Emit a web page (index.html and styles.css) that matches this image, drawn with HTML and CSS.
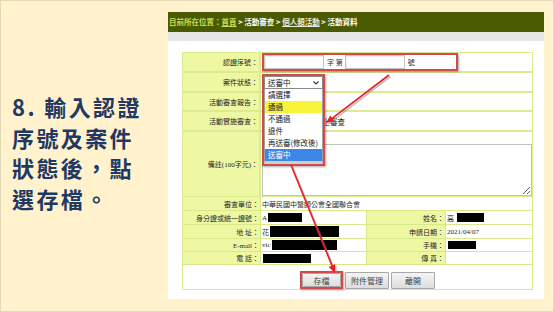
FILE: index.html
```html
<!DOCTYPE html>
<html lang="zh-Hant">
<head>
<meta charset="utf-8">
<title>存檔步驟</title>
<link rel="stylesheet" href="styles.css">
</head>
<body>
<div class="slide">
  <div class="note">
    <p>8. 輸入認證<br>序號及案件<br>狀態後，點<br>選存檔。</p>
  </div>
  <div class="panel">
    <div class="crumb"><span class="here">目前所在位置：<u>首頁</u></span> &gt; 活動審查 &gt; <u class="link">個人類活動</u> &gt; 活動資料</div>
    <div class="subbar"></div>
    <div class="content">
      <div class="form">
        <div class="lab">認證序號：</div>
        <div class="val">
          <div class="redbox serial">
            <span class="inp"></span><span class="t">字 第</span><span class="inp"></span><span class="t">號</span>
          </div>
        </div>
        <div class="lab">案件狀態：</div>
        <div class="val rel">
          <div class="dropdown">
            <div class="select">送審中
              <svg class="chev" width="6" height="4" viewBox="0 0 6 4"><path d="M0.5 0.5 L3 3 L5.5 0.5" fill="none" stroke="#333" stroke-width="1.1"/></svg>
            </div>
            <ul class="options">
              <li>請選擇</li>
              <li class="hl">通過</li>
              <li>不通過</li>
              <li>退件</li>
              <li>再送審(修改後)</li>
              <li class="sel">送審中</li>
            </ul>
          </div>
        </div>
        <div class="lab">活動審查報告：</div>
        <div class="val"></div>
        <div class="lab">活動實施審查：</div>
        <div class="val"><span class="review">線上審查</span></div>
        <div class="lab">備註(100字元)：</div>
        <div class="val"><textarea class="memo"></textarea></div>
      </div>
      <div class="info">
        <div class="lab">審查單位：</div>
        <div class="val span3">中華民國中醫師公會全國聯合會</div>
        <div class="lab">身分證或統一證號：</div>
        <div class="val">A<span class="mask w34 h9"></span></div>
        <div class="lab">姓名：</div>
        <div class="val">高<span class="mask w27 h9 m3"></span></div>
        <div class="lab">地 址：</div>
        <div class="val">花<span class="mask w69 h11"></span></div>
        <div class="lab">申請日期：</div>
        <div class="val">2021/04/07</div>
        <div class="lab">E-mail：</div>
        <div class="val">vic<span class="mask w65 h10"></span></div>
        <div class="lab">手機：</div>
        <div class="val"><span class="mask w28 h8"></span></div>
        <div class="lab">電 話：</div>
        <div class="val"><span class="mask w48 h9"></span></div>
        <div class="lab">傳 真：</div>
        <div class="val"></div>
      </div>
      <div class="buttons">
        <div class="redbox savebox"><button class="btn">存檔</button></div>
        <button class="btn">附件管理</button>
        <button class="btn">離開</button>
      </div>
    </div>
  </div>
  <svg class="arrows" width="554" height="312" viewBox="0 0 554 312">
    <g fill="#8a8a8a" stroke="#8a8a8a" opacity="0.55">
      <line x1="390.5" y1="76.5" x2="333.9" y2="119.7" stroke-width="1.6"/>
      <polygon points="327.5,124.5 336,122.5 331.7,116.9" stroke="none"/>
      <line x1="292.5" y1="166.5" x2="333.5" y2="267.1" stroke-width="1.6"/>
      <polygon points="336.5,274.5 336.7,265.8 330.2,268.4" stroke="none"/>
    </g>
    <g fill="#ee1c24" stroke="#ee1c24">
      <line x1="389" y1="75" x2="332.4" y2="118.2" stroke-width="1.6"/>
      <polygon points="326,123 334.5,121 330.2,115.4" stroke="none"/>
      <line x1="291" y1="165" x2="332" y2="265.6" stroke-width="1.6"/>
      <polygon points="335,273 335.2,264.3 328.7,266.9" stroke="none"/>
    </g>
  </svg>
</div>
</body>
</html>
```

FILE: styles.css
```css
html, body {
  margin: 0;
  padding: 0;
}

body {
  width: 554px;
  height: 312px;
  overflow: hidden;
}

.slide {
  position: relative;
  width: 554px;
  height: 312px;
  background: #fff2cc;
  box-shadow: inset 0 0 0 1px #e4d9b6;
  display: flex;
  align-items: flex-start;
}

.note {
  flex: none;
  width: 168px;
  box-sizing: border-box;
  padding: 91px 0 0 12px;
}

.note p {
  margin: 0;
  font-family: "Noto Sans CJK TC", "Noto Sans", sans-serif;
  font-weight: 700;
  font-size: 22px;
  line-height: 30.5px;
  letter-spacing: 2.4px;
  color: #1f3864;
  white-space: nowrap;
}

.panel {
  flex: none;
  width: 376px;
  height: 287px;
  margin-top: 12px;
  background: #ffffff;
  display: flex;
  flex-direction: column;
}

.crumb {
  height: 20px;
  line-height: 20px;
  background: #4a5a00;
  color: #ffffff;
  font-family: "Noto Sans CJK TC", sans-serif;
  font-weight: 700;
  font-size: 7.5px;
  white-space: nowrap;
  padding-left: 1px;
}

.crumb .here {
  color: #c6dd55;
}

.crumb u {
  text-underline-offset: 1px;
}

.crumb .link {
  color: #ececdc;
}

.subbar {
  height: 9px;
  background: #e6e6e6;
}

.content {
  padding: 11px 11px 0 14px;
  font-family: "Liberation Serif", "Noto Sans CJK TC", serif;
  font-size: 7px;
  color: #262626;
}

.form {
  display: grid;
  grid-template-columns: 76px 271px;
  grid-template-rows: 18px 18px 17px 18px 64px;
  gap: 2px;
  border: 1px solid #dcea90;
  background: #dcea90;
}

.lab {
  background: #eef7a2;
  display: flex;
  align-items: center;
  justify-content: flex-end;
  padding-right: 1px;
  white-space: nowrap;
}

.val {
  background: #ffffff;
  display: flex;
  align-items: center;
  white-space: nowrap;
}

.rel {
  position: relative;
}

.redbox {
  box-sizing: border-box;
  border: 2px solid #d24a4a;
  box-shadow: 1px 1px 2px rgba(0, 0, 0, 0.35);
}

.serial {
  margin-left: 1px;
  width: 196px;
  height: 18px;
  display: flex;
  align-items: center;
}

.inp {
  display: block;
  box-sizing: border-box;
  width: 60px;
  height: 14px;
  border: 1px solid #c4c4c4;
  box-shadow: inset 1px 1px 1px rgba(0, 0, 0, 0.08);
  background: #ffffff;
}

.t {
  padding: 0 2px 0 3px;
}

.dropdown {
  position: absolute;
  left: 1px;
  top: 1px;
  z-index: 5;
  width: 63px;
  height: 92px;
  box-sizing: border-box;
  border: 2px solid #d24a4a;
  box-shadow: 1px 1px 2px rgba(0, 0, 0, 0.35);
  background: #ffffff;
  font-family: "Noto Sans CJK TC", sans-serif;
  font-size: 7.5px;
  color: #222222;
}

.select {
  position: relative;
  box-sizing: border-box;
  height: 13px;
  line-height: 11px;
  border: 1px solid #8a8a8a;
  padding-left: 3px;
  background: #ffffff;
}

.chev {
  position: absolute;
  right: 3px;
  top: 4px;
}

.options {
  list-style: none;
  margin: 0;
  padding: 0;
  border: 1px solid #a0a0a0;
  border-top: none;
  border-bottom: 3px solid #cfcfcf;
}

.options li {
  height: 12px;
  line-height: 12px;
  padding-left: 3px;
  white-space: nowrap;
}

.options .hl {
  background: #f8f43a;
}

.options .sel {
  background: #3d86e8;
  color: #ffffff;
}

.review {
  padding-left: 54px;
  font-family: "Noto Sans CJK TC", sans-serif;
  font-size: 7.5px;
}

.form .val:last-child {
  align-items: flex-start;
}

.memo {
  display: block;
  box-sizing: border-box;
  margin: 12px 0 0 1px;
  width: 270px;
  height: 52px;
  border: 1px solid #c2c2c2;
  padding: 0;
  resize: both;
  background: #ffffff;
}

.info {
  display: grid;
  grid-template-columns: 77px 105px 78px 86px;
  grid-template-rows: 13px 13px 13px 12px 12px;
  gap: 1px;
  border: 1px solid #d8e88a;
  border-top: none;
  background: #d8e88a;
}

.info .val {
  padding-left: 1px;
}

.span3 {
  grid-column: span 3;
}

.mask {
  display: inline-block;
  background: #000000;
  margin-left: 1px;
}

.m3 { margin-left: 3px; }
.w27 { width: 27px; }
.w28 { width: 28px; }
.w34 { width: 34px; }
.w48 { width: 48px; }
.w65 { width: 65px; }
.w69 { width: 69px; }
.h8 { height: 8px; }
.h9 { height: 9px; }
.h10 { height: 10px; }
.h11 { height: 11px; }

.buttons {
  box-sizing: border-box;
  height: 25px;
  border: 1px solid #dcea90;
  border-top: none;
  display: flex;
  align-items: flex-end;
  gap: 2px;
  padding-left: 117px;
}

.savebox {
  width: 43px;
  height: 18px;
  padding: 0;
  display: flex;
}

.btn {
  box-sizing: border-box;
  height: 17px;
  width: 44px;
  margin: 0;
  padding: 0;
  border: 1px solid #a8a8a8;
  border-radius: 1px;
  background: linear-gradient(#f4f4f4, #dddddd);
  font-family: "Noto Sans CJK TC", sans-serif;
  font-size: 8px;
  color: #444444;
}

.savebox .btn {
  width: 39px;
  height: 14px;
}

.arrows {
  position: absolute;
  left: 0;
  top: 0;
  pointer-events: none;
  z-index: 10;
}
```
